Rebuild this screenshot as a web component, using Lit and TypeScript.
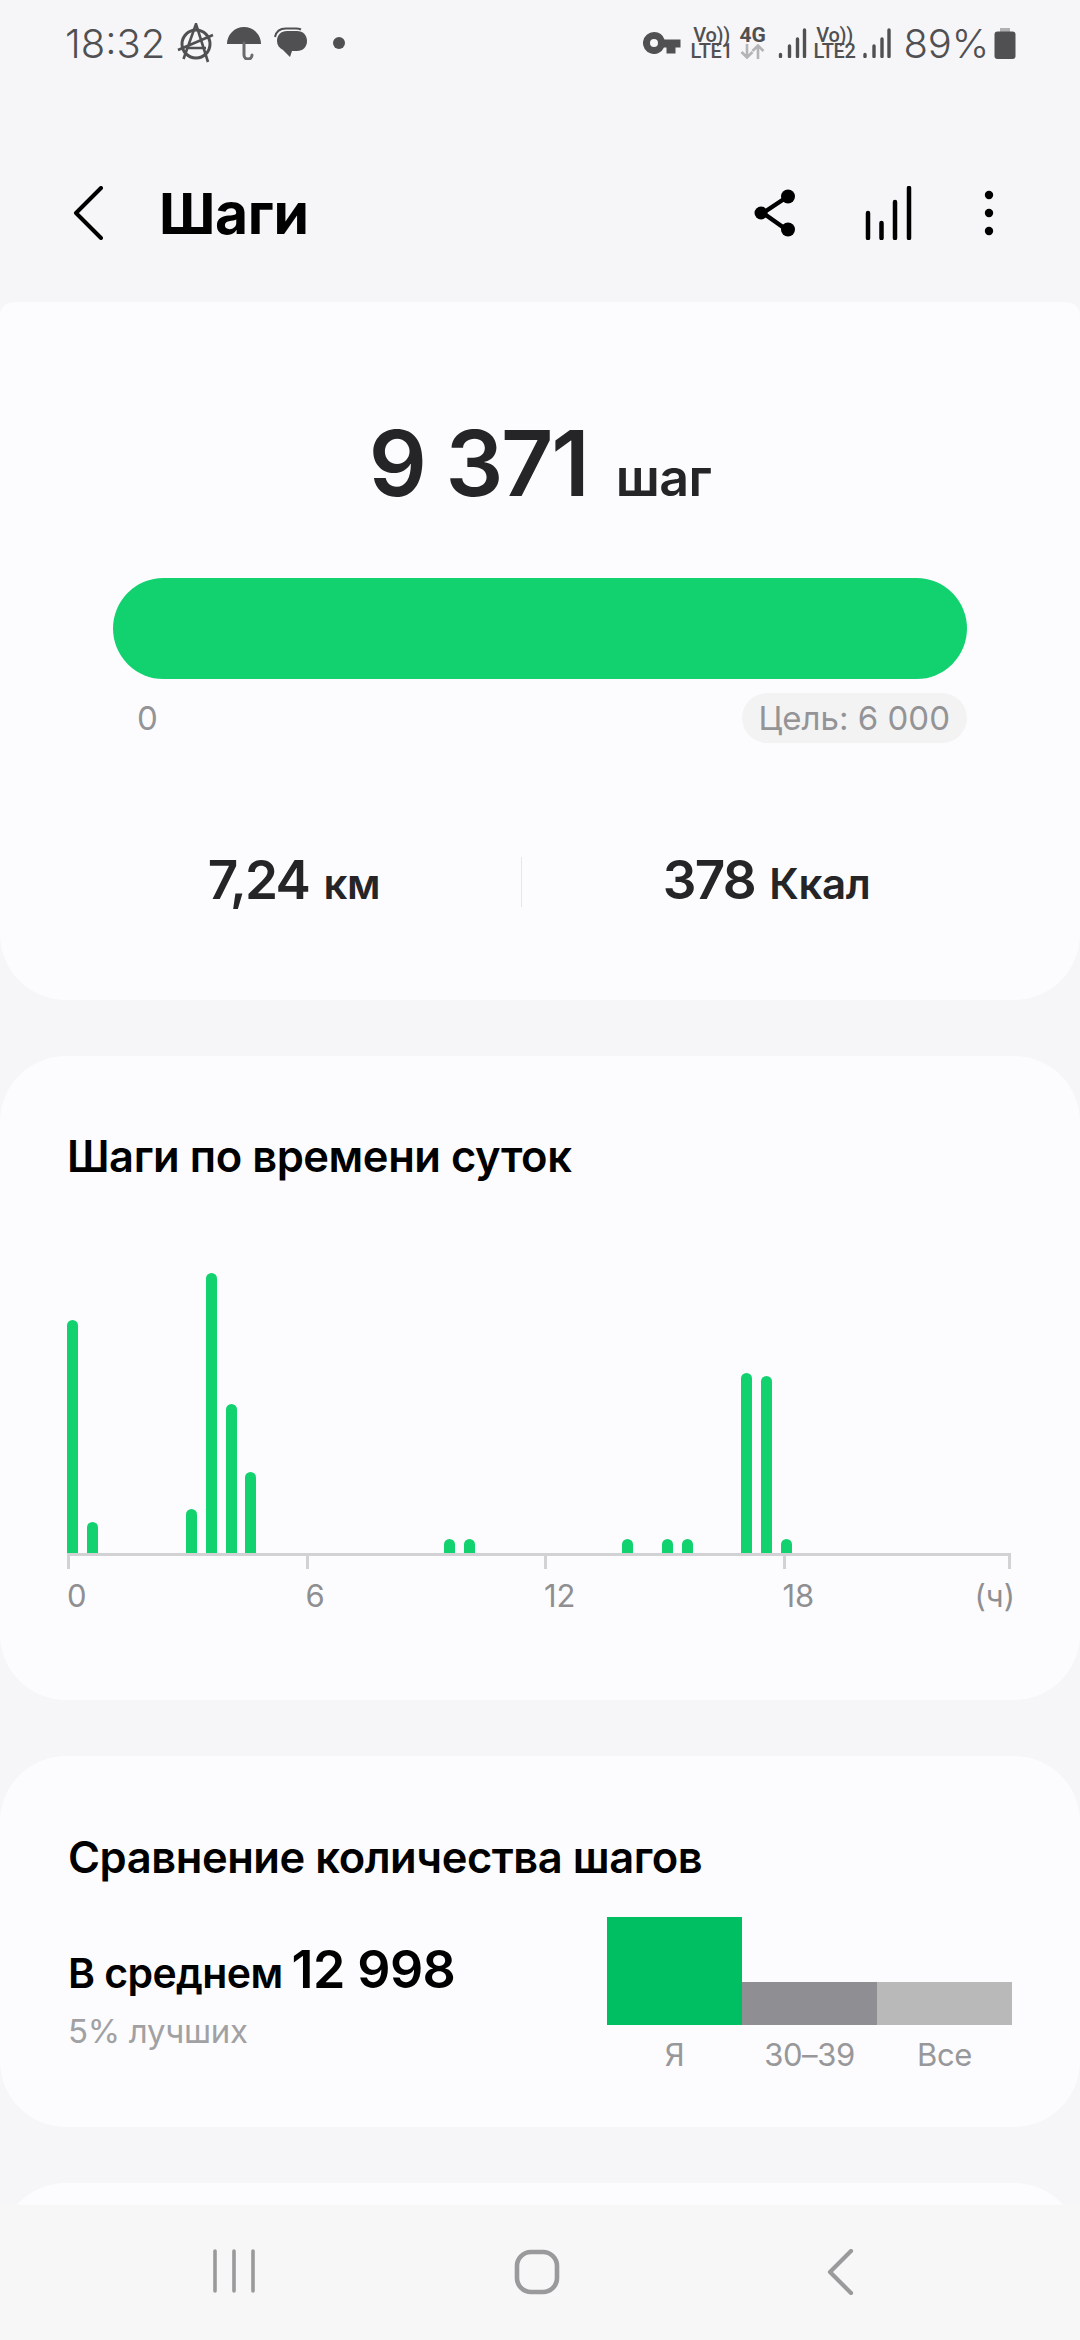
import { LitElement, html, css, svg } from "lit";
import { customElement } from "lit/decorators.js";

const SLOT = 19.84;
// half-hour buckets with steps: [slot index, bar height in px]
const BARS: Record<number, number> = {
  0: 233, 1: 31, 6: 44, 7: 280, 8: 149, 9: 81, 19: 14, 20: 14,
  28: 14, 30: 14, 31: 14, 34: 180, 35: 177, 36: 14,
};

const signal = (w: number) => svg`
  <svg class="sig" viewBox="0 0 28 30" style="width:${w}px">
    <g stroke="#505052" stroke-width="3.4" stroke-linecap="round">
      <path d="M2 26.5v2M11 18v10.5M19 11v17.5M26 2v26.5" />
    </g>
  </svg>`;

@customElement("app-root")
export class AppRoot extends LitElement {
  static styles = css`
    :host {
      display: block;
      width: 1080px;
      height: 2340px;
      font-family: Inter, "Noto Sans", sans-serif;
      background: #f6f6f8;
      color: #000;
      overflow: hidden;
    }
    .page {
      height: 2340px;
      display: flex;
      flex-direction: column;
    }
    .status {
      height: 86px;
      flex: none;
      display: flex;
      align-items: center;
      padding: 0 64px 0 65px;
      color: #505052;
    }
    .time {
      font-size: 40px;
      font-weight: 300;
      letter-spacing: 0;
      width: 112px;
    }
    .status svg {
      display: block;
      flex: none;
    }
    .ico-a {
      width: 38px;
      height: 40px;
    }
    .ico-u {
      width: 36px;
      height: 34px;
      margin-left: 11px;
    }
    .ico-b {
      width: 34px;
      height: 32px;
      margin-left: 12px;
    }
    .dot {
      width: 12px;
      height: 12px;
      border-radius: 50%;
      background: #505052;
      margin-left: 25px;
    }
    .spacer {
      flex: 1;
    }
    .ico-k {
      width: 38px;
      height: 22px;
    }
    .volte {
      width: 40px;
      margin-left: 11px;
      display: flex;
      flex-direction: column;
      align-items: center;
      font-family: Roboto, sans-serif;
      font-weight: 500;
      line-height: 16px;
      font-size: 20px;
      letter-spacing: -0.3px;
      white-space: nowrap;
    }
    .volte b {
      font-weight: 500;
      font-size: 20px;
    }
    .net {
      width: 28px;
      margin-left: 7px;
      display: flex;
      flex-direction: column;
      align-items: center;
      font-family: Roboto, sans-serif;
      font-weight: 700;
      font-size: 21px;
      line-height: 17px;
    }
    .net svg {
      width: 25px;
      height: 15px;
    }
    .sig {
      height: 30px;
      margin-left: 11px;
    }
    .sig-wrap {
      display: flex;
    }
    .sig-wrap .sig {
      margin-left: 8px;
    }
    .volte.tight {
      margin-left: 8px;
    }
    .pct {
      font-size: 40px;
      font-weight: 300;
      margin-left: 13px;
      letter-spacing: -0.2px;
    }
    .batt {
      width: 22px;
      height: 31px;
      margin-left: 5px;
    }

    .header {
      height: 216px;
      flex: none;
      box-sizing: border-box;
      padding: 38px 0 0 72px;
      display: flex;
      align-items: center;
    }
    .header svg {
      display: block;
      flex: none;
    }
    .title {
      font-size: 57px;
      font-weight: 700;
      letter-spacing: -0.4px;
      margin-left: 55px;
      flex: 1;
    }
    .h-back {
      width: 32px;
      height: 54px;
    }
    .h-share {
      width: 46px;
      height: 50px;
      margin-right: 66px;
    }
    .h-bars {
      width: 50px;
      height: 54px;
      margin-right: 68px;
    }
    .h-more {
      width: 12px;
      height: 48px;
      margin-right: 85px;
    }

    .content {
      flex: 1;
      min-height: 0;
      overflow: hidden;
      display: flex;
      flex-direction: column;
      gap: 56px;
    }
    .card {
      flex: none;
      background: #fcfcfe;
      border-radius: 66px;
      box-sizing: border-box;
    }
    .card.summary {
      height: 698px;
      border-radius: 14px 14px 66px 66px;
      padding: 111px 113px 0;
    }
    .total {
      display: flex;
      justify-content: center;
      align-items: baseline;
      gap: 28px;
      color: #252527;
      font-size: 91px;
      line-height: 100px;
      font-weight: 600;
      letter-spacing: -2.2px;
    }
    .total span {
      font-size: 52px;
      letter-spacing: -0.5px;
    }
    .goalbar {
      height: 101px;
      border-radius: 51px;
      background: #12d16f;
      margin-top: 50px;
    }
    .scale {
      display: flex;
      justify-content: space-between;
      align-items: center;
      margin-top: 14px;
      padding-left: 24px;
      color: #949496;
      font-size: 33px;
    }
    .goal {
      background: #f3f3f4;
      border-radius: 25px;
      height: 50px;
      line-height: 50px;
      padding: 0 17px;
    }
    .stats {
      display: grid;
      grid-template-columns: 454px 490px;
      margin: 114px -44px 0 -46px;
      color: #252527;
    }
    .stat {
      text-align: center;
      font-size: 53px;
      font-weight: 600;
      line-height: 46px;
      letter-spacing: -1.8px;
    }
    .stat span {
      font-size: 42px;
      letter-spacing: -0.4px;
      margin-left: 3px;
    }
    .stat + .stat {
      border-left: 1px solid #e6e6e8;
    }

    .card-title {
      font-size: 43.5px;
      line-height: 50px;
      font-weight: 600;
      letter-spacing: -0.45px;
    }
    .card.hours {
      height: 644px;
      padding: 75px 68px 0 67px;
    }
    .chart {
      height: 280px;
      margin-top: 92px;
      display: flex;
      align-items: flex-end;
    }
    .slot {
      flex: none;
    }
    .bar {
      width: 11px;
      background: #12d16f;
      border-radius: 5.5px 5.5px 0 0;
    }
    .axis {
      height: 16px;
      width: 944px;
      box-sizing: border-box;
      border-top: 3px solid #d2d2d4;
      display: grid;
      grid-template-columns: repeat(3, 238.5px) 1fr;
    }
    .axis i {
      border-left: 3px solid #d2d2d4;
    }
    .axis i:last-child {
      border-right: 3px solid #d2d2d4;
    }
    .labels {
      width: 948px;
      display: grid;
      grid-template-columns: repeat(3, 238.5px) 1fr;
      margin-top: 7px;
      font-size: 31px;
      line-height: 40px;
      color: #8f8f92;
    }
    .labels div {
      display: flex;
      justify-content: space-between;
    }

    .card.compare {
      height: 371px;
      padding: 76px 68px 0;
    }
    .cmp {
      display: flex;
      justify-content: space-between;
      margin-top: 26px;
    }
    .avg {
      padding-top: 31px;
    }
    .avg-line {
      display: flex;
      align-items: baseline;
      gap: 9px;
      font-size: 41px;
      line-height: 62px;
      font-weight: 600;
      letter-spacing: -0.6px;
    }
    .avg-line b {
      font-size: 52px;
      font-weight: 600;
      letter-spacing: -0.6px;
    }
    .best {
      font-size: 33px;
      line-height: 40px;
      color: #a1a1a3;
      margin-top: 7px;
      letter-spacing: -0.3px;
    }
    .cmp-chart {
      width: 405px;
      margin-top: 9px;
    }
    .cmp-bars {
      height: 108px;
      display: flex;
      align-items: flex-end;
    }
    .cmp-bars div {
      flex: 1;
    }
    .cmp-labels {
      display: flex;
      margin-top: 10px;
      font-size: 31px;
      line-height: 40px;
      color: #98989b;
      letter-spacing: -0.4px;
    }
    .cmp-labels span {
      flex: 1;
      text-align: center;
    }
    .card.more {
      height: 200px;
    }

    .nav {
      height: 135px;
      flex: none;
      background: #f7f7f7;
      display: flex;
      align-items: flex-start;
      padding: 44px 89px 0 82px;
      box-sizing: border-box;
    }
    .nav div {
      flex: 1;
      display: flex;
      justify-content: center;
    }
    .nav svg {
      display: block;
    }
  `;

  renderStatus() {
    return html`
      <div class="status">
        <span class="time">18:32</span>
        <svg class="ico-a" viewBox="0 0 38 40" fill="none" stroke="#505052" stroke-width="3">
          <circle cx="19" cy="21" r="14" />
          <path d="M6.5 36L19 1l12 38M1 27l35-15M10 25h19" stroke-width="2.6" />
        </svg>
        <svg class="ico-u" viewBox="0 0 36 34">
          <path d="M1 18a17 17 0 0 1 34 0z" fill="#505052" />
          <path d="M18 17v12a4 4 0 0 0 8 0" fill="none" stroke="#6a6a6c" stroke-width="3" stroke-linecap="round" />
        </svg>
        <svg class="ico-b" viewBox="0 0 34 32">
          <path d="M3 14C3 8 7 4 13 4h10c6 0 10 4 10 10s-4 10-10 10h-5l-2 6-7-7c-4-2-6-5-6-9z" fill="#505052" />
          <path d="M1 10c1-5 5-8.500 11-8.500h10c2 0 4 .5 5 1" fill="none" stroke="#505052" stroke-width="2" />
        </svg>
        <span class="dot"></span>
        <span class="spacer"></span>
        <svg class="ico-k" viewBox="0 0 38 22" fill="#505052">
          <path fill-rule="evenodd" d="M11 0a11 11 0 0 1 10.500 7.500H37.500v8h-5v6h-9v-6h-2.500A11 11 0 1 1 11 0zm0 7a4 4 0 1 0 0 8 4 4 0 0 0 0-8z" />
        </svg>
        <div class="volte"><b>Vo))</b><span>LTE1</span></div>
        <div class="net">
          4G
          <svg viewBox="0 0 25 15" fill="none" stroke="#b4b4b6" stroke-width="2.6">
            <path d="M7 0v13M1.500 8l5.500 5.500L12.500 8M18 15V2M12.500 7L18 1.500 23.500 7" />
          </svg>
        </div>
        ${signal(29)}
        <div class="volte tight"><b>Vo))</b><span>LTE2</span></div>
        <span class="sig-wrap">${signal(28)}</span>
        <span class="pct">89%</span>
        <svg class="batt" viewBox="0 0 22 31">
          <path d="M6 0h10v4H6z" fill="#b0b0b2" />
          <rect x="0.500" y="3.500" width="21" height="27.500" rx="3" fill="#505052" />
        </svg>
      </div>
    `;
  }

  renderHeader() {
    return html`
      <div class="header">
        <svg class="h-back" viewBox="0 0 32 54" fill="none" stroke="#000" stroke-width="4" stroke-linecap="round" stroke-linejoin="round">
          <path d="M29 2L4 27l25 25" />
        </svg>
        <div class="title">Шаги</div>
        <svg class="h-share" viewBox="0 0 46 50">
          <path d="M34 9L10 25l24 17" fill="none" stroke="#000" stroke-width="4.500" />
          <circle cx="35" cy="8.500" r="7" />
          <circle cx="8" cy="25" r="6.500" />
          <circle cx="35" cy="41.500" r="7" />
        </svg>
        <svg class="h-bars" viewBox="0 0 50 54" stroke="#000" stroke-width="4.500" stroke-linecap="round">
          <path d="M3 27v25M16.500 37v15M30 16v36M44 2v50" />
        </svg>
        <svg class="h-more" viewBox="0 0 12 48">
          <circle cx="6" cy="6" r="4.200" />
          <circle cx="6" cy="24" r="4.200" />
          <circle cx="6" cy="42" r="4.200" />
        </svg>
      </div>
    `;
  }

  renderSummary() {
    return html`
      <section class="card summary">
        <div class="total">9 371 <span>шаг</span></div>
        <div class="goalbar"></div>
        <div class="scale"><span>0</span><span class="goal">Цель: 6 000</span></div>
        <div class="stats">
          <div class="stat">7,24 <span>км</span></div>
          <div class="stat">378 <span>Ккал</span></div>
        </div>
      </section>
    `;
  }

  renderHours() {
    const slots = Array.from({ length: 40 }, (_, i) => BARS[i] ?? 0);
    return html`
      <section class="card hours">
        <div class="card-title">Шаги по времени суток</div>
        <div class="chart">
          ${slots.map(
            (h) => html`<div class="slot" style="width:${SLOT}px"><div class="bar" style="height:${h}px"></div></div>`
          )}
        </div>
        <div class="axis"><i></i><i></i><i></i><i></i></div>
        <div class="labels">
          <span>0</span><span>6</span><span>12</span>
          <div><span>18</span><span>(ч)</span></div>
        </div>
      </section>
    `;
  }

  renderCompare() {
    return html`
      <section class="card compare">
        <div class="card-title">Сравнение количества шагов</div>
        <div class="cmp">
          <div class="avg">
            <div class="avg-line">В среднем <b>12 998</b></div>
            <div class="best">5% лучших</div>
          </div>
          <div class="cmp-chart">
            <div class="cmp-bars">
              <div style="height:108px;background:#00bf63"></div>
              <div style="height:43px;background:#8f8f93"></div>
              <div style="height:43px;background:#b9b9b9"></div>
            </div>
            <div class="cmp-labels"><span>Я</span><span>30–39</span><span>Все</span></div>
          </div>
        </div>
      </section>
    `;
  }

  render() {
    return html`
      <div class="page">
        ${this.renderStatus()} ${this.renderHeader()}
        <div class="content">
          ${this.renderSummary()} ${this.renderHours()} ${this.renderCompare()}
          <section class="card more"></section>
        </div>
        <div class="nav">
          <div>
            <svg width="44" height="44" viewBox="0 0 44 44" stroke="#9a9a9c" stroke-width="3.600" stroke-linecap="round">
              <path d="M3 2v40M22 2v40M41 2v40" />
            </svg>
          </div>
          <div>
            <svg width="46" height="46" viewBox="0 0 46 46" fill="none" stroke="#9a9a9c" stroke-width="4.600">
              <rect x="3" y="3" width="40" height="40" rx="14" />
            </svg>
          </div>
          <div>
            <svg width="28" height="46" viewBox="0 0 28 46" fill="none" stroke="#9a9a9c" stroke-width="4.200" stroke-linecap="round" stroke-linejoin="round">
              <path d="M25 2L4 23l21 21" />
            </svg>
          </div>
        </div>
      </div>
    `;
  }
}
